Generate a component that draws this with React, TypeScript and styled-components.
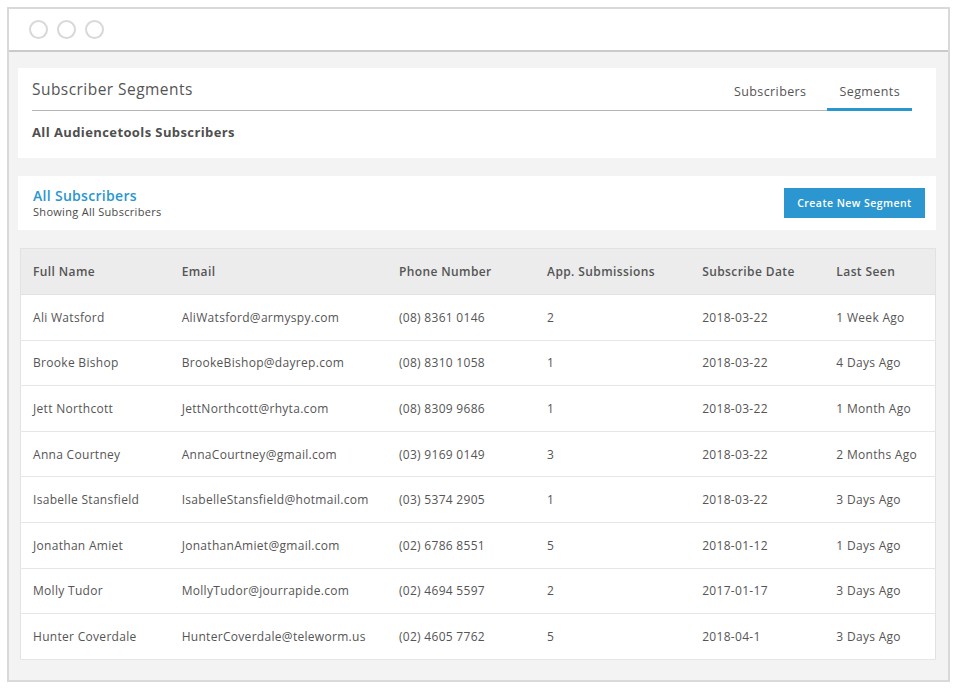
import styled, { createGlobalStyle } from 'styled-components';

const GlobalStyle = createGlobalStyle`
  body {
    margin: 0;
    background: #ffffff;
    font-family: 'Open Sans', 'Liberation Sans', sans-serif;
    color: #555555;
  }
`;

interface Subscriber {
  name: string;
  email: string;
  phone: string;
  submissions: number;
  date: string;
  lastSeen: string;
}

const subscribers: Subscriber[] = [
  { name: 'Ali Watsford', email: 'AliWatsford@armyspy.com', phone: '(08) 8361 0146', submissions: 2, date: '2018-03-22', lastSeen: '1 Week Ago' },
  { name: 'Brooke Bishop', email: 'BrookeBishop@dayrep.com', phone: '(08) 8310 1058', submissions: 1, date: '2018-03-22', lastSeen: '4 Days Ago' },
  { name: 'Jett Northcott', email: 'JettNorthcott@rhyta.com', phone: '(08) 8309 9686', submissions: 1, date: '2018-03-22', lastSeen: '1 Month Ago' },
  { name: 'Anna Courtney', email: 'AnnaCourtney@gmail.com', phone: '(03) 9169 0149', submissions: 3, date: '2018-03-22', lastSeen: '2 Months Ago' },
  { name: 'Isabelle Stansfield', email: 'IsabelleStansfield@hotmail.com', phone: '(03) 5374 2905', submissions: 1, date: '2018-03-22', lastSeen: '3 Days Ago' },
  { name: 'Jonathan Amiet', email: 'JonathanAmiet@gmail.com', phone: '(02) 6786 8551', submissions: 5, date: '2018-01-12', lastSeen: '1 Days Ago' },
  { name: 'Molly Tudor', email: 'MollyTudor@jourrapide.com', phone: '(02) 4694 5597', submissions: 2, date: '2017-01-17', lastSeen: '3 Days Ago' },
  { name: 'Hunter Coverdale', email: 'HunterCoverdale@teleworm.us', phone: '(02) 4605 7762', submissions: 5, date: '2018-04-1', lastSeen: '3 Days Ago' },
];

const columns = [
  { label: 'Full Name', width: 149 },
  { label: 'Email', width: 217 },
  { label: 'Phone Number', width: 148 },
  { label: 'App. Submissions', width: 155 },
  { label: 'Subscribe Date', width: 134 },
  { label: 'Last Seen', width: 111 },
];

export default function App() {
  return (
    <>
      <GlobalStyle />
      <Frame>
        <TitleBar>
          <Dot />
          <Dot />
          <Dot />
        </TitleBar>
        <Content>
          <HeaderCard>
            <HeaderTop>
              <PageTitle>Subscriber Segments</PageTitle>
              <Tabs>
                <Tab>Subscribers</Tab>
                <Tab $active>Segments</Tab>
              </Tabs>
            </HeaderTop>
            <Subheading>All Audiencetools Subscribers</Subheading>
          </HeaderCard>

          <SegmentCard>
            <div>
              <SegmentTitle>All Subscribers</SegmentTitle>
              <SegmentCaption>Showing All Subscribers</SegmentCaption>
            </div>
            <PrimaryButton>Create New Segment</PrimaryButton>
          </SegmentCard>

          <Table>
            <colgroup>
              {columns.map((c) => (
                <col key={c.label} style={{ width: c.width }} />
              ))}
            </colgroup>
            <thead>
              <tr>
                {columns.map((c) => (
                  <Th key={c.label}>{c.label}</Th>
                ))}
              </tr>
            </thead>
            <tbody>
              {subscribers.map((s) => (
                <tr key={s.email}>
                  <Td>{s.name}</Td>
                  <Td>{s.email}</Td>
                  <Td>{s.phone}</Td>
                  <Td>{s.submissions}</Td>
                  <Td>{s.date}</Td>
                  <Td>{s.lastSeen}</Td>
                </tr>
              ))}
            </tbody>
          </Table>
        </Content>
      </Frame>
    </>
  );
}

const Frame = styled.div`
  width: 939px;
  margin: 7px 0 0 7px;
  border: 2px solid #d9d9d9;
`;

const TitleBar = styled.div`
  height: 41px;
  display: flex;
  align-items: center;
  gap: 9px;
  padding-left: 20px;
  background: #ffffff;
  border-bottom: 2px solid #cacaca;
`;

const Dot = styled.span`
  width: 15px;
  height: 15px;
  border-radius: 50%;
  border: 2px solid #d8d8d8;
`;

const Content = styled.div`
  background: #f3f3f3;
  padding: 16px 12px 20px 9px;
  display: flex;
  flex-direction: column;
  gap: 18px;
`;

const HeaderCard = styled.div`
  background: #ffffff;
  height: 90px;
  padding: 0 24px 0 14px;
  box-sizing: border-box;
`;

const HeaderTop = styled.div`
  height: 42px;
  display: flex;
  align-items: stretch;
  justify-content: space-between;
  border-bottom: 1px solid #b5b5b5;
`;

const PageTitle = styled.h1`
  margin: 0;
  align-self: center;
  font-size: 15.5px;
  font-weight: 400;
  letter-spacing: 0.45px;
  color: #555555;
`;

const Tabs = styled.div`
  display: flex;
  align-items: stretch;
  gap: 9px;
`;

const Tab = styled.div<{ $active?: boolean }>`
  display: flex;
  align-items: center;
  justify-content: center;
  padding: 6px 12px 0;
  font-size: 12.5px;
  letter-spacing: 0.4px;
  color: #555555;
  margin-bottom: -1px;
  border-bottom: 3px solid ${(p) => (p.$active ? '#2a96cf' : 'transparent')};
`;

const Subheading = styled.h2`
  margin: 0;
  padding-top: 12px;
  font-size: 13px;
  font-weight: 700;
  letter-spacing: 0.4px;
  color: #4f4f4f;
`;

const SegmentCard = styled.div`
  background: #ffffff;
  height: 54px;
  padding: 0 11px 0 15px;
  box-sizing: border-box;
  display: flex;
  align-items: center;
  justify-content: space-between;
`;

const SegmentTitle = styled.div`
  font-size: 14px;
  font-weight: 600;
  letter-spacing: 0.3px;
  color: #2a96cf;
  line-height: 18px;
`;

const SegmentCaption = styled.div`
  font-size: 11px;
  letter-spacing: 0.3px;
  color: #4a4a4a;
  line-height: 14px;
`;

const PrimaryButton = styled.button`
  width: 141px;
  height: 30px;
  border: none;
  background: #2b96cf;
  color: #ffffff;
  font-family: inherit;
  font-size: 10.5px;
  font-weight: 600;
  letter-spacing: 0.45px;
`;

const Table = styled.table`
  width: 916px;
  margin-left: 2px;
  border-collapse: collapse;
  table-layout: fixed;
  background: #ffffff;
  border: 1px solid #e2e2e2;
`;

const Th = styled.th`
  height: 45px;
  padding: 0 0 0 12px;
  text-align: left;
  background: #ececec;
  font-size: 12px;
  font-weight: 600;
  letter-spacing: 0.4px;
  color: #555555;
  white-space: nowrap;
  border-bottom: 1px solid #e2e2e2;
`;

const Td = styled.td`
  height: 44.6px;
  padding: 0 0 0 12px;
  font-size: 12px;
  letter-spacing: 0.3px;
  color: #555555;
  white-space: nowrap;
  border-bottom: 1px solid #e6e6e6;
`;
